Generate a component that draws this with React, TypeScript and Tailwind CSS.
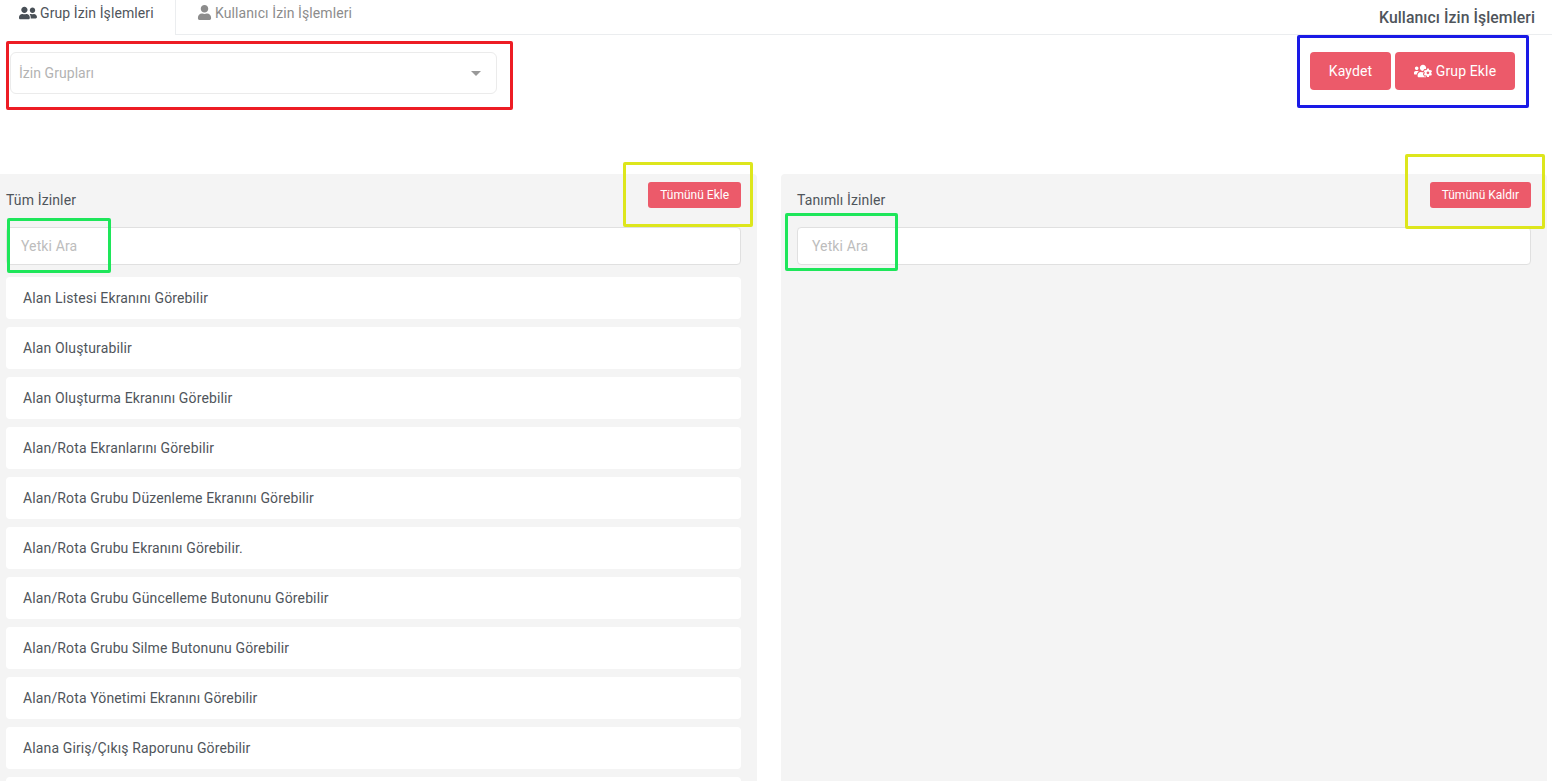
import { FaUser, FaUserFriends, FaUsersCog } from "react-icons/fa";

const permissions = [
  "Alan Listesi Ekranını Görebilir",
  "Alan Oluşturabilir",
  "Alan Oluşturma Ekranını Görebilir",
  "Alan/Rota Ekranlarını Görebilir",
  "Alan/Rota Grubu Düzenleme Ekranını Görebilir",
  "Alan/Rota Grubu Ekranını Görebilir.",
  "Alan/Rota Grubu Güncelleme Butonunu Görebilir",
  "Alan/Rota Grubu Silme Butonunu Görebilir",
  "Alan/Rota Yönetimi Ekranını Görebilir",
  "Alana Giriş/Çıkış Raporunu Görebilir",
];

const marks = [
  "left-[6px] top-[41px] h-[69px] w-[507px] border-[#ed1c24]",
  "left-[1297px] top-[35px] h-[73px] w-[232px] border-[#1a1ae6]",
  "left-[623px] top-[162px] h-[65px] w-[130px] border-[#dde61c]",
  "left-[1405px] top-[154px] h-[75px] w-[140px] border-[#dde61c]",
  "left-[7px] top-[218px] h-[55px] w-[104px] border-[#1ee65a]",
  "left-[785px] top-[213px] h-[58px] w-[113px] border-[#1ee65a]",
];

function PanelHead({ title, action }: { title: string; action: string }) {
  return (
    <div className="flex h-[53px] items-start justify-between">
      <span className="mt-[16px] text-[14px] leading-[20px] tracking-[0.13px] text-[#4f555b]">{title}</span>
      <button
        type="button"
        className="mt-[8px] h-[26px] rounded-[3px] bg-[#ec5a6a] px-3 text-[12px] text-white"
      >
        {action}
      </button>
    </div>
  );
}

function SearchBox() {
  return (
    <div className="flex h-[38px] items-center rounded-[4px] border border-[#e0e0e0] bg-white px-[14px] text-[14px] tracking-[0.13px] text-[#bdbdbd]">
      Yetki Ara
    </div>
  );
}

export default function App() {
  return (
    <div className="relative h-[781px] overflow-hidden bg-white font-['Roboto',sans-serif]">
      <div className="flex h-[35px] items-start justify-between border-b border-[#ebedef]">
        <div className="flex h-[35px] text-[14px] tracking-[0.1px]">
          <div className="flex h-[35px] w-[176px] items-start gap-[3px] border-r border-[#ebedef] bg-white pl-[19px] pt-[3px] leading-[20px] text-[#4f555b]">
            <FaUserFriends size={18} className="mt-[1px] text-[#495057]" />
            <span>Grup İzin İşlemleri</span>
          </div>
          <div className="flex items-start gap-[3px] pl-[21px] pt-[3px] leading-[20px] text-[#8c8c8c]">
            <FaUser size={15} className="mt-[2px] text-[#8c8c8c]" />
            <span>Kullanıcı İzin İşlemleri</span>
          </div>
        </div>
        <h1 className="mr-[17px] mt-[8px] text-[15.75px] leading-[20px] font-medium tracking-[0.08px] text-[#4f555b]">
          Kullanıcı İzin İşlemleri
        </h1>
      </div>

      <div className="flex h-[139px] items-start justify-between pl-[10px] pr-[37px] pt-[17px]">
        <div className="flex h-[42px] w-[487px] items-center justify-between rounded-[6px] border border-[#ebebeb] pl-[8px] pr-[15px] text-[14px] tracking-[0.05px] text-[#b3b3b3]">
          <span>İzin Grupları</span>
          <span className="h-0 w-0 border-x-[5px] border-t-[5px] border-x-transparent border-t-[#999999]" />
        </div>
        <div className="flex gap-[4px]">
          <button
            type="button"
            className="h-[38px] w-[81px] rounded-[4px] bg-[#ec5a6a] text-[14px] tracking-[0.13px] text-white"
          >
            Kaydet
          </button>
          <button
            type="button"
            className="flex h-[38px] w-[120px] items-center justify-center gap-[4px] rounded-[4px] bg-[#ec5a6a] text-[14px] tracking-[0.13px] text-white"
          >
            <FaUsersCog size={18} />
            Grup Ekle
          </button>
        </div>
      </div>

      <div className="flex items-start">
        <section className="h-[607px] w-[757px] rounded-tr-[4px] bg-[#f4f4f4] pl-[6px] pr-[16px]">
          <PanelHead title="Tüm İzinler" action="Tümünü Ekle" />
          <SearchBox />
          <ul className="mt-[12px] flex flex-col gap-[8px]">
            {permissions.map((name) => (
              <li
                key={name}
                className="flex h-[42px] shrink-0 items-center rounded-[4px] bg-white pl-[17px] text-[14px] tracking-[0.13px] text-[#4f555b]"
              >
                {name}
              </li>
            ))}
            <li className="h-[42px] shrink-0 rounded-[4px] bg-white" />
          </ul>
        </section>
        <section className="ml-[24px] h-[607px] w-[766px] rounded-t-[4px] bg-[#f4f4f4] pl-[16px] pr-[16px]">
          <PanelHead title="Tanımlı İzinler" action="Tümünü Kaldır" />
          <SearchBox />
        </section>
      </div>

      {marks.map((mark) => (
        <div key={mark} className={`pointer-events-none absolute rounded-[2px] border-[3px] ${mark}`} />
      ))}
    </div>
  );
}
